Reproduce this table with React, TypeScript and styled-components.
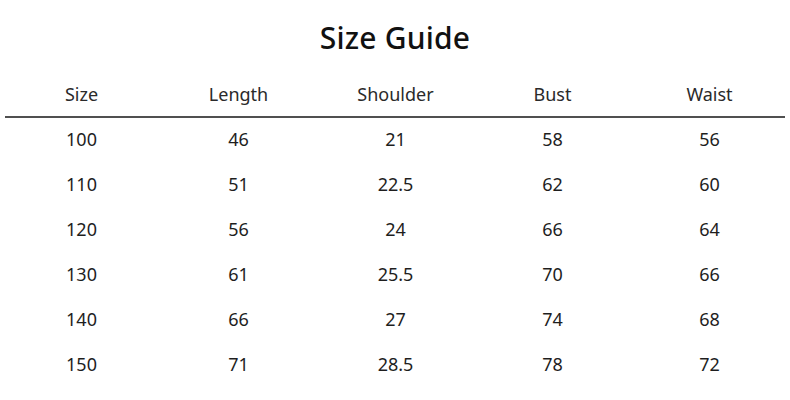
import React from "react";
import styled, { createGlobalStyle } from "styled-components";

const Global = createGlobalStyle`
  html, body { margin: 0; padding: 0; background: #fff; }
  body { font-family: "Noto Sans", "Open Sans", sans-serif; color: #1a1a1a; }
`;

const Page = styled.div`
  width: 790px;
  height: 400px;
  display: flex;
  flex-direction: column;
  align-items: center;
  overflow: hidden;
`;

const Title = styled.h1`
  margin: 16px 0 0;
  height: 44px;
  line-height: 44px;
  font-size: 30px;
  font-weight: 500;
  color: #111;
  letter-spacing: 0.2px;
`;

const Table = styled.div`
  margin-top: 12px;
  width: 785px;
  align-self: flex-start;
  margin-left: 3px;
  display: flex;
  flex-direction: column;
`;

const Row = styled.div<{ $head?: boolean }>`
  display: grid;
  grid-template-columns: repeat(5, 1fr);
  height: 45px;
  box-sizing: border-box;
  padding-bottom: 2px;
  align-items: center;
  font-size: 18px;
  color: ${(p) => (p.$head ? "#2a2a2a" : "#1e1e1e")};
`;

const Rule = styled.div`
  height: 2px;
  margin: -1px 0 -1px 2px;
  width: 780px;
  background: #505050;
`;

const Cell = styled.div`
  text-align: center;
`;

const head = ["Size", "Length", "Shoulder", "Bust", "Waist"];
const rows = [
  ["100", "46", "21", "58", "56"],
  ["110", "51", "22.5", "62", "60"],
  ["120", "56", "24", "66", "64"],
  ["130", "61", "25.5", "70", "66"],
  ["140", "66", "27", "74", "68"],
  ["150", "71", "28.5", "78", "72"],
];

export default function App() {
  return (
    <Page>
      <Global />
      <Title>Size Guide</Title>
      <Table>
        <Row $head>
          {head.map((h) => (
            <Cell key={h}>{h}</Cell>
          ))}
        </Row>
        <Rule />
        {rows.map((r) => (
          <Row key={r[0]}>
            {r.map((c, i) => (
              <Cell key={i}>{c}</Cell>
            ))}
          </Row>
        ))}
      </Table>
    </Page>
  );
}
